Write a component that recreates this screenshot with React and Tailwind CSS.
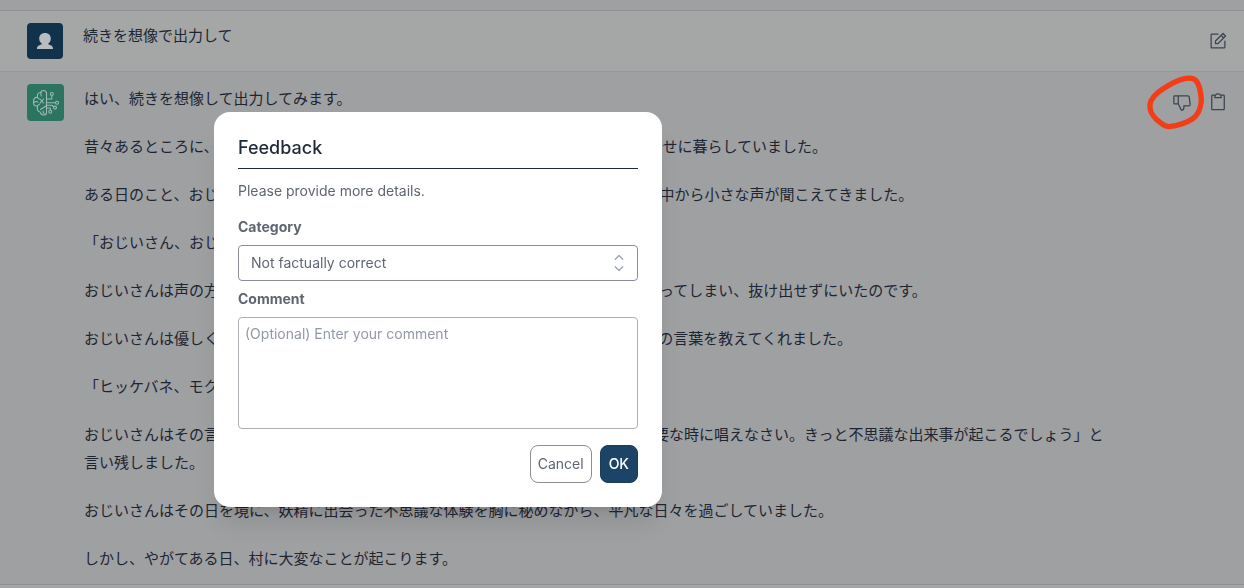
import React from "react";
import {
  PiCaretUpDown,
  PiClipboard,
  PiNotePencil,
  PiThumbsDown,
} from "react-icons/pi";

const story = [
  "はい、続きを想像して出力してみます。",
  "昔々あるところに、心の優しいおじいさんとおばあさんが、小さな山村で2人仲良く幸せに暮らしていました。",
  "ある日のこと、おじいさんは山へ芝刈りに出かけました。しばらくすると1本の竹やぶ中から小さな声が聞こえてきました。",
  "「おじいさん、おじいさん、助けてください」",
  "おじいさんは声の方へ近づいてみました。すると小さな妖精が1人、竹の間に羽がはまってしまい、抜け出せずにいたのです。",
  "おじいさんは優しく妖精を助けてあげました。妖精は大変喜んで、お礼に1つだけ秘密の言葉を教えてくれました。",
  "「ヒッケバネ、モクモクレン」",
  "おじいさんはその言葉を忘れぬように覚えました。妖精は「この言葉を本当に必ず必要な時に唱えなさい。きっと不思議な出来事が起こるでしょう」と言い残しました。",
  "おじいさんはその日を境に、妖精に出会った不思議な体験を胸に秘めながら、平凡な日々を過ごしていました。",
  "しかし、やがてある日、村に大変なことが起こります。",
];

function UserAvatar() {
  return (
    <div className="flex size-9 shrink-0 items-center justify-center rounded bg-[#12324c]">
      <svg viewBox="0 0 18 18" className="size-[18px] fill-[#b9bdc0]" aria-hidden="true">
        <path d="M9 1C5.600 1 3.200 3.200 3.200 6.400c0 2.200.9 3.900 2.500 5v.8C4.200 13 1 13.700 1 16.200V17h16v-.8c0-2.500-3.200-3.200-4.700-4v-.8c1.600-1.100 2.500-2.800 2.500-5C14.800 3.200 12.400 1 9 1Z" />
      </svg>
    </div>
  );
}

function AssistantAvatar() {
  return (
    <div className="flex size-[37px] shrink-0 items-center justify-center rounded bg-[#2b745f]">
      <svg
        viewBox="0 0 28 28"
        className="size-7 fill-none stroke-[#9dbab0]"
        strokeWidth="1.1"
        strokeLinecap="round"
        strokeLinejoin="round"
        aria-hidden="true"
      >
        <path d="M14.500 3.500C13.500 1 9.500 .8 8.500 3.500 6 3.500 5 5.600 5.500 8.500 2.800 8 1.200 10 1.600 12.500c-.8 2.500.6 4.800 3.900 4.500-.8 3 .1 5.700 2.600 6 1 3.600 5.400 4 6.400 1.200Z" />
        <path d="M9 3.500c-.4 1.500-.2 2.500.3 3.500M5.500 8.500c.6 1.200 1.600 1.600 2.500 1.500l3.500 4M11.500 10 8 14.200M2 13.500c1.500-1.500 3-1.300 3.800-.2M5.500 17c.4-1 1-1.500 2-1.500M14 17l-5.500 3.500M11.200 22c-.4 1 .1 2 1 2.500" />
        <path d="M14.500 10h5.300V6.500M14.500 13.800h9M14.500 16.200h5.200l2 1.500M14.500 19h3.800v2.300" />
        <circle cx="19.800" cy="5" r="1.500" />
        <circle cx="25" cy="13.800" r="1.500" />
        <circle cx="23" cy="18.600" r="1.500" />
        <circle cx="18.300" cy="22.800" r="1.500" />
      </svg>
    </div>
  );
}

function IconButton({ label, children }) {
  return (
    <button type="button" aria-label={label} className="text-xl text-[#3d4350]">
      {children}
    </button>
  );
}

function FeedbackDialog() {
  return (
    <div className="fixed inset-0 flex items-start pt-28 pl-[214px]">
      <form
        role="dialog"
        aria-modal="true"
        aria-labelledby="feedback-title"
        className="w-full max-w-md rounded-2xl bg-white p-6 text-sm text-[#5f6672] shadow-xl"
      >
        <h2
          id="feedback-title"
          className="border-b border-[#1f2937] pb-2 text-lg leading-6 font-medium text-[#1f2937]"
        >
          Feedback
        </h2>
        <p className="mt-3">Please provide more details.</p>
        <label htmlFor="category" className="mt-4 block font-bold">
          Category
        </label>
        <div className="relative mt-2">
          <select
            id="category"
            className="block h-9 w-full appearance-none rounded border border-[#8b8e98] bg-white pr-10 pl-3"
          >
            <option>Not factually correct</option>
          </select>
          <PiCaretUpDown
            className="pointer-events-none absolute inset-y-0 right-[9px] my-auto size-5 text-[#9ca3af]"
            aria-hidden="true"
          />
        </div>
        <label htmlFor="comment" className="mt-2 block font-bold">
          Comment
        </label>
        <textarea
          id="comment"
          placeholder="(Optional) Enter your comment"
          className="mt-2 block h-28 w-full resize-none rounded border border-[#acafb3] p-1.5 placeholder:text-[#9299a6]"
        />
        <div className="mt-4 flex justify-end gap-2">
          <button type="button" className="rounded-lg border border-[#8b8e98] px-[7px] py-2">
            Cancel
          </button>
          <button
            type="submit"
            className="rounded-lg border border-[#1f3a56] bg-[#1c4467] p-2 font-medium text-white"
          >
            OK
          </button>
        </div>
      </form>
    </div>
  );
}

export default function App() {
  return (
    <div className="min-h-screen bg-[#a5a7a7] font-['Inter','Noto_Sans_CJK_JP',sans-serif] text-[#1e2532]">
      <div className="h-[11px] border-b border-[#8f9193] bg-[#9fa0a2]" />
      <section className="flex gap-5 border-b border-[#969899] bg-[#a5a7a6] px-4 py-3">
        <div className="flex flex-1 gap-5 pl-[11px]">
          <UserAvatar />
          <p className="flex-1 pt-px text-[15px] leading-6">続きを想像で出力して</p>
        </div>
        <div className="flex items-center">
          <IconButton label="Edit">
            <PiNotePencil />
          </IconButton>
        </div>
      </section>
      <section className="flex items-start gap-5 border-b border-[#8f9193] bg-[#9fa0a2] px-4 pt-3 pb-[11px]">
        <div className="flex flex-1 items-start gap-5 pl-[11px]">
          <AssistantAvatar />
          <div className="flex flex-1 flex-col gap-5 pt-px text-[15px] leading-7">
            {story.map((line) => (
              <p key={line}>{line}</p>
            ))}
          </div>
        </div>
        <div className="flex w-24 items-center justify-end gap-4 pt-2">
          <IconButton label="Bad response">
            <PiThumbsDown />
          </IconButton>
          <IconButton label="Copy">
            <PiClipboard />
          </IconButton>
        </div>
      </section>
      <FeedbackDialog />
      <svg
        viewBox="0 0 192 180"
        className="pointer-events-none absolute top-[72px] right-9 h-[60px] w-16 fill-none stroke-[#f23d17]"
        strokeWidth="16"
        strokeLinecap="round"
        strokeLinejoin="round"
        aria-hidden="true"
      >
        <path d="M18 98C20 80 34 66 55 52 78 37 100 24 122 20 138 17 150 17 158 28 168 42 171 66 172 86 170 112 162 130 145 141 125 154 100 161 75 164 62 164 52 155 38 143 24 130 16 116 18 98Z" />
      </svg>
    </div>
  );
}
